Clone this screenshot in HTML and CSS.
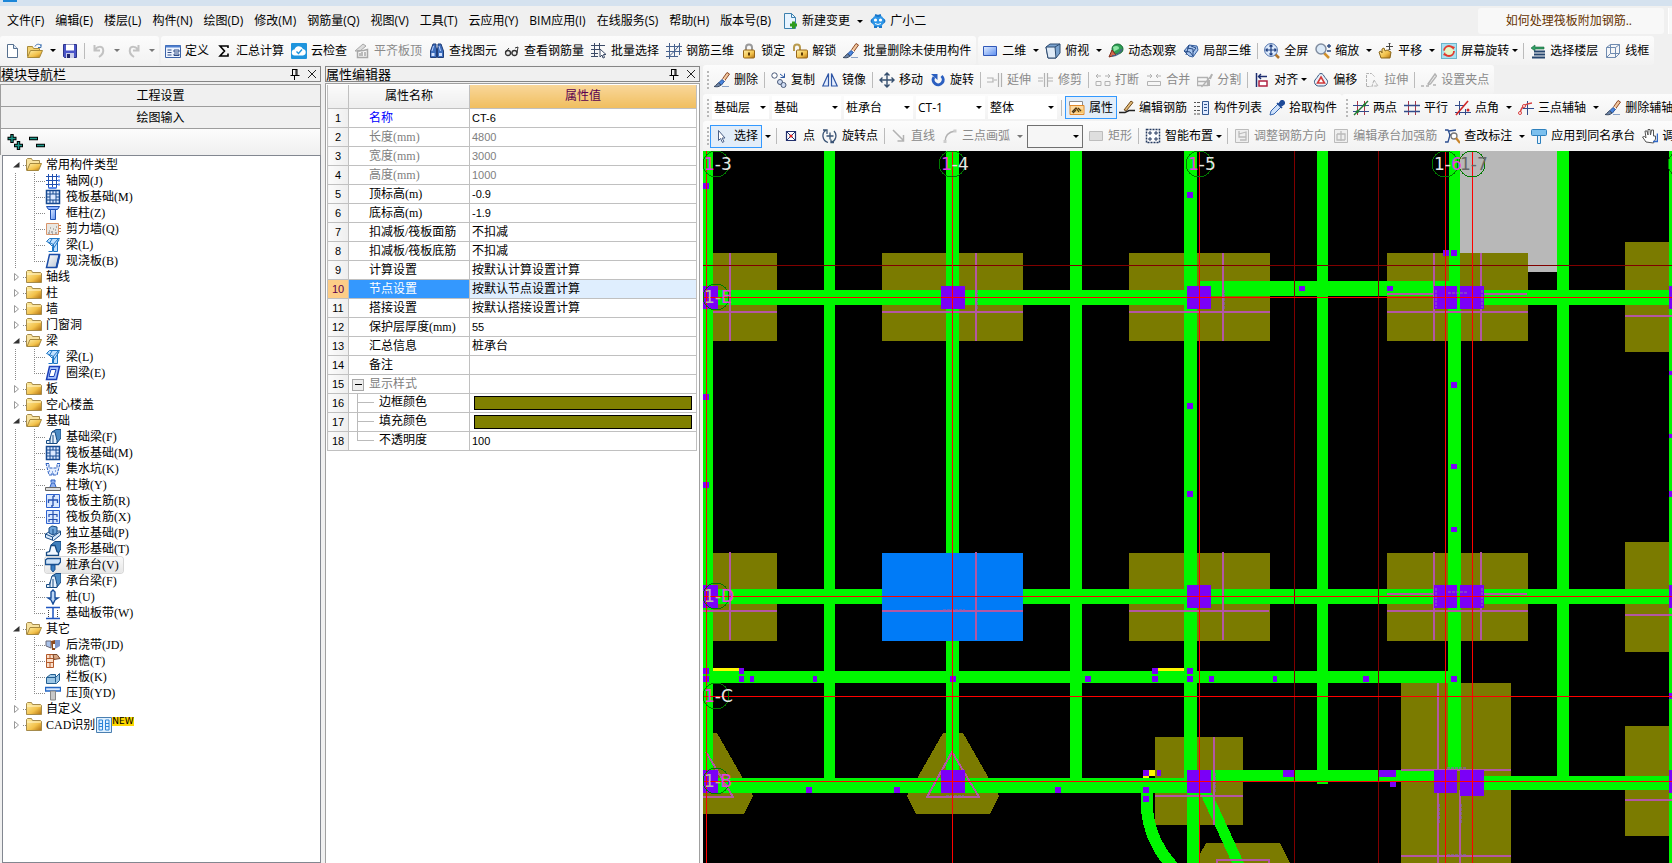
FILE: index.html
```
<!DOCTYPE html>
<html lang="zh-CN">
<head>
<meta charset="utf-8">
<title>钢筋算量</title>
<link rel="stylesheet" href="styles.css">
</head>
<body>
<svg class="sprite" aria-hidden="true">
  <defs>
    <linearGradient id="gGold" x1="0" y1="0" x2="1" y2="1"><stop offset="0" stop-color="#fff0a8"/><stop offset=".6" stop-color="#f2c14a"/><stop offset="1" stop-color="#b06f10"/></linearGradient>
    <linearGradient id="gBlue" x1="0" y1="0" x2="1" y2="1"><stop offset="0" stop-color="#e4efff"/><stop offset="1" stop-color="#5b8df0"/></linearGradient>
    <linearGradient id="gGray" x1="0" y1="0" x2="1" y2="1"><stop offset="0" stop-color="#fff"/><stop offset="1" stop-color="#b8c4d4"/></linearGradient>
  </defs>
  <symbol id="new" viewBox="0 0 16 16"><path d="M3.500 1.500h6l4 4v9h-10z" fill="#fff" stroke="#56708f"/><path d="M9.500 1.500v4h4" fill="#dbe6f5" stroke="#56708f"/></symbol>
  <symbol id="open" viewBox="0 0 16 16"><path d="M.5 13.500v-10h5l1 2h6v3" fill="#f3d271" stroke="#a88a3a"/><path d="M.5 14.500l3-7h12l-3 7z" fill="url(#gGold)" stroke="#a88a3a"/><path d="M8 3.500c1-2.500 4-3 6-1v-1m0 0v3h-3" fill="none" stroke="#3b6fb0"/></symbol>
  <symbol id="save" viewBox="0 0 16 16"><path d="M1.500 1.500h13v13h-12l-1-1z" fill="#4a55c8" stroke="#2c348a"/><path d="M4 1.500h8v6H4z" fill="#fff"/><path d="M4 10h8v5H4z" fill="#c9cdea"/><path d="M5 11h3v4H5z" fill="#22286d"/></symbol>
  <symbol id="undo" viewBox="0 0 16 16"><path d="M3.500 2v5.500H9M4 7c2-4 7-4 8-1s-1 6-4 8" fill="none" stroke="#c2c2c2" stroke-width="2"/></symbol>
  <symbol id="redo" viewBox="0 0 16 16"><path d="M12.500 2v5.500H7M12 7c-2-4-7-4-8-1s1 6 4 8" fill="none" stroke="#c2c2c2" stroke-width="2"/></symbol>
  <symbol id="define" viewBox="0 0 16 16"><path d="M.5 2.500h15v12H.5z" fill="#eef4ff" stroke="#3a62a8"/><path d="M.5 2.500h15v2H.5z" fill="#4d7fd0"/><path d="M2.500 7h4m-4 2.500h4m-4 2.500h4M9 7h5v2H9zM9 11h5v1.500H9z" fill="none" stroke="#2f4c85"/></symbol>
  <symbol id="sigma" viewBox="0 0 16 16"><path d="M12 5V3H4l4.500 5L4 13h8v-2.500" fill="none" stroke="#000" stroke-width="1.600"/></symbol>
  <symbol id="cloud" viewBox="0 0 16 16"><rect width="16" height="16" rx="1" fill="#1e94dd"/><path d="M4 12.500a3 3 0 0 1-.5-6A4.500 4.500 0 0 1 12 6a3.300 3.300 0 0 1 0 6.500z" fill="#fff"/><path d="M5.500 8.500l2 2 3.500-4" fill="none" stroke="#1e94dd" stroke-width="1.400"/></symbol>
  <symbol id="flat" viewBox="0 0 16 16"><path d="M1 8L9 1l3 2-6 5z" fill="#ddd" stroke="#a8a8a8"/><path d="M3.500 8v6.500h10v-8l-4 1zM6 10v3m2-4v4m3-4v4" fill="none" stroke="#a8a8a8" stroke-width="1.500"/></symbol>
  <symbol id="binoc" viewBox="0 0 16 16"><path d="M4 1h3v3l.5 2v8.500h-6V8zM9 1h3l2.500 7v6.500h-6V6L9 4z" fill="#3f6fbd" stroke="#1f3d78"/><path d="M2.500 10h3v3h-3zM10 10h3v3h-3z" fill="#cfe0ff"/><path d="M4.500 3L3 8m7-5l1.500 5" stroke="#bcd2ff"/></symbol>
  <symbol id="glasses" viewBox="0 0 16 16"><circle cx="4" cy="10" r="2.500" fill="#eee" stroke="#333" stroke-width="1.300"/><circle cx="10.500" cy="10" r="2.500" fill="#eee" stroke="#333" stroke-width="1.300"/><path d="M1.500 9L5 5m8 5l1-6-3 1M6.500 10h1.500" fill="none" stroke="#333"/></symbol>
  <symbol id="batch" viewBox="0 0 16 16"><path d="M0 2.500h14M0 6.500h9M3.500 0v14M8.500 0v7M0 10.500h7M0 13.500h7" fill="none" stroke="#3b4a66"/><path d="M9 6v8l2-2 1 3 1.500-.5-1-3H15z" fill="#fff" stroke="#3b4a66"/></symbol>
  <symbol id="cage" viewBox="0 0 16 16"><path d="M0 3.500h16M0 8.500h16M0 13.500h12M3.500 0v16M8.500 1v13M13.500 0v12M3.500 13l5-5 5-6" fill="none" stroke="#47628e"/></symbol>
  <symbol id="lock" viewBox="0 0 16 16"><path d="M5 8V4.500a3 3 0 0 1 6 0V8" fill="none" stroke="#9a9a9a" stroke-width="2"/><rect x="2.500" y="7" width="11" height="8" rx="1" fill="url(#gGold)" stroke="#96661a"/><path d="M8 9.500v3" stroke="#5d3c08" stroke-width="2"/></symbol>
  <symbol id="unlock" viewBox="0 0 16 16"><path d="M2 8V4.500a3 3 0 0 1 6 0V7" fill="none" stroke="#b99b4e" stroke-width="2"/><rect x="4.500" y="7" width="11" height="8" rx="1" fill="url(#gGold)" stroke="#96661a"/><path d="M10 9.500v3" stroke="#5d3c08" stroke-width="2"/></symbol>
  <symbol id="eraser" viewBox="0 0 16 16"><path d="M13 .5L15.500 2l-5 7L8 7.500z" fill="#f3c79e" stroke="#8b4a28"/><path d="M8 7.500l2.500 1.500-3 4-3-2z" fill="#4a86de" stroke="#24509a"/><path d="M8.500 7l2.500 1.800" stroke="#fff"/><path d="M0 14.500c2 0 2-2.500 4.500-3.500l2.500 2c-2 2-4 2-7 1.500z" fill="#6f86a8" stroke="#3a4a62"/><path d="M8 14.500h7" stroke="#8ba2c4"/></symbol>
  <symbol id="rect2d" viewBox="0 0 16 16"><path d="M1.500 3.500h13v9h-13z" fill="url(#gBlue)" stroke="#3058b8"/></symbol>
  <symbol id="cube" viewBox="0 0 16 16"><path d="M1 4l4-3h10v9l-4 5H3z" fill="#7ba3cf" stroke="#2d4b70"/><path d="M1 4h9l1 11H3z" fill="#dfeaf6" stroke="#2d4b70"/><path d="M10 4l5-3" stroke="#2d4b70"/></symbol>
  <symbol id="orbit" viewBox="0 0 16 16"><ellipse cx="9.500" cy="6" rx="5.500" ry="5" fill="#2e9e54" stroke="#146a32"/><path d="M5 4c3-2 6-1 6 1s-4 2-5 4" fill="#8ee6a5"/><path d="M1 14l3-7 4 5z" fill="#d26a4f" stroke="#7b2b1b"/><path d="M4 13c5 0 8-3 10-7" fill="none" stroke="#49608a" stroke-width="1.500"/></symbol>
  <symbol id="part3d" viewBox="0 0 16 16"><path d="M1 8l5-6 8 1 1 4-5 7-4-1z" fill="#a9c6ee" stroke="#355f9f"/><path d="M4 5l6 1v7M8 3l5 2-3 4M1 8l6 1 3 4M6 2L3 12" fill="none" stroke="#274a85"/></symbol>
  <symbol id="full" viewBox="0 0 16 16"><path d="M11 11l4 4" stroke="#b2762b" stroke-width="2.500"/><circle cx="7" cy="7" r="6.400" fill="#dce9fa" stroke="#4b6ea9"/><path d="M7 2v10M2 7h10M5.500 3.500L7 2l1.500 1.500M5.500 10.500L7 12l1.500-1.500M3.500 5.500L2 7l1.500 1.500M10.500 5.500L12 7l-1.500 1.500" fill="none" stroke="#1f3f80" stroke-width="1.200"/></symbol>
  <symbol id="zoom" viewBox="0 0 16 16"><path d="M9 10l5 5" stroke="#d0902c" stroke-width="2.500"/><circle cx="6" cy="6" r="5" fill="#dbe9f7" stroke="#808da0" stroke-width="1.500"/><path d="M12 3h4M14 1v4M12 8h4" stroke="#2c4a80" stroke-width="1.400"/></symbol>
  <symbol id="pan" viewBox="0 0 16 16"><path d="M3 15l-2-6 2-1 1 2V6l2-1 1 3 2-1 2 1 2 1-1 6z" fill="url(#gGold)" stroke="#8d681b"/><path d="M11.500 0v7M8 3.500h7M10.500 1l1-1 1 1M10.500 6l1 1 1-1" fill="none" stroke="#444"/></symbol>
  <symbol id="rotscreen" viewBox="0 0 16 16"><rect x=".5" y=".5" width="15" height="15" fill="#a9e0f0" stroke="#6cb6cc"/><circle cx="8" cy="8" r="5" fill="#e4f6c8" stroke="#e23b2e" stroke-width="1.800" stroke-dasharray="12 3.700"/><path d="M11 3l3 1-2 3zM5 13l-3-1 2-3z" fill="#e23b2e"/></symbol>
  <symbol id="floors" viewBox="0 0 16 16"><path d="M1 5l4-3v2h9v2H5v2z" fill="#2f9e63" stroke="#1b6a42" stroke-width=".6"/><path d="M4 8.500h11M4 11.500h11M2 14.500h13" stroke="#27476f" stroke-width="1.800"/></symbol>
  <symbol id="wire" viewBox="0 0 16 16"><path d="M1.500 4.500h9v10h-9zM1.500 4.500l4-3h9l-4 3M14.500 1.500v9l-4 4M5.500 1.500v9h9M5.500 10.500l-4 4" fill="#eff5fc" fill-opacity=".4" stroke="#6f8bb0"/></symbol>
  <symbol id="copy" viewBox="0 0 16 16"><circle cx="3.500" cy="3.500" r="2.700" fill="#fff" stroke="#4a5a78"/><circle cx="9" cy="10" r="2.500" fill="#cfdcf2" stroke="#4a5a78"/><circle cx="12.500" cy="13" r="2.500" fill="#cfdcf2" stroke="#4a5a78"/><path d="M9 2l4.500 3.500m0-4v4h-4" fill="none" stroke="#2c57a0"/></symbol>
  <symbol id="mirror" viewBox="0 0 16 16"><path d="M6.500 1.500v12.500H.8zM9.500 1.500v12.500h5.700z" fill="#e5eeff" stroke="#2f56a5" stroke-width="1.200"/></symbol>
  <symbol id="move" viewBox="0 0 16 16"><path d="M8 1v14M1 8h14M5.500 3.500L8 1l2.500 2.500M5.500 12.500L8 15l2.500-2.500M3.500 5.500L1 8l2.500 2.500M12.500 5.500L15 8l-2.500 2.500" fill="none" stroke="#37506f" stroke-width="1.400"/></symbol>
  <symbol id="rotate" viewBox="0 0 16 16"><path d="M4 5a5 5 0 1 0 7.500-1" fill="none" stroke="#2b5fc0" stroke-width="3"/><path d="M1 2h6.500v6z" fill="#2b5fc0"/></symbol>
  <symbol id="extend" viewBox="0 0 16 16"><path d="M0 6h6v4H0M7 8h3M11.500 1v14M14.500 1v14" fill="none" stroke="#b2b2b2" stroke-width="1.200"/></symbol>
  <symbol id="trim" viewBox="0 0 16 16"><path d="M0 6h5m-5 3h5M6.500 1v14M9.500 1v14M10 6h5m-5 3h5" fill="none" stroke="#b2b2b2" stroke-width="1.200"/></symbol>
  <symbol id="break" viewBox="0 0 16 16"><path d="M1 4h5M10 4h5M3 2L1 4l2 2m10-4l2 2-2 2M1 9.500h5v4H1zM10 9.500h5v4h-5z" fill="none" stroke="#b2b2b2"/></symbol>
  <symbol id="merge" viewBox="0 0 16 16"><path d="M1 4h5M10 4h5M4 2l2 2-2 2m8-4l-2 2 2 2M1.500 9.500h13v4h-13z" fill="none" stroke="#b2b2b2"/></symbol>
  <symbol id="split" viewBox="0 0 16 16"><path d="M.5 5.500h10v8h-10zM.5 9.500h10M4.500 15L15 3" fill="none" stroke="#b2b2b2" stroke-width="1.300"/><path d="M12 8v6M15 2l-2 5" stroke="#b2b2b2" stroke-width="2"/></symbol>
  <symbol id="align" viewBox="0 0 16 16"><path d="M2.500 1v14" stroke="#1d2d70" stroke-width="1.500"/><path d="M5 9h8v5H5z" fill="#fff" stroke="#b02040" stroke-width="1.500"/><path d="M5 4.500h8M7 2L4.500 4.500 7 7" fill="none" stroke="#1d2d70" stroke-width="1.400"/></symbol>
  <symbol id="offset" viewBox="0 0 16 16"><path d="M8 1.500c2 0 2.500 2 4 4s3 3 2.500 5-2 3.500-4 3.500h-5c-2 0-3.500-1.500-4-3.500s1-3 2.500-5 2-4 4-4z" fill="#eaf1fa" stroke="#38587f"/><path d="M8 5l3.500 6h-7z" fill="#fff" stroke="#d23b3b" stroke-width="1.600"/></symbol>
  <symbol id="stretch" viewBox="0 0 16 16"><path d="M2.500 14V1.500h5l3 3M2.500 14.500h5M10 8l4 6H8z" fill="none" stroke="#b2b2b2" stroke-dasharray="3 1"/></symbol>
  <symbol id="grip" viewBox="0 0 16 16"><path d="M0 14h3m2 0h3M7 12L14 2l1.500 2-6 8-2 .5zM12 13h3" fill="none" stroke="#b2b2b2" stroke-width="1.400"/></symbol>
  <symbol id="props" viewBox="0 0 16 16"><path d="M.5 1.500h13v4H.5z" fill="#fff" stroke="#8b8b8b"/><path d="M1 5.500h14v9H1z" fill="#fbd9a0" stroke="#e08a2c"/><path d="M4 12l4-5 4 2 3 1v3h-5z" fill="#f6c46a"/><path d="M3 12l4-4 3 4m-1-4l3 3m-8 2l3-3" fill="none" stroke="#4b3413" stroke-width="1.200"/></symbol>
  <symbol id="editbar" viewBox="0 0 16 16"><path d="M0 12.500h6l4-2h6" fill="none" stroke="#222" stroke-width="1.400"/><path d="M5 10l7-9 2 1.500-6.500 8z" fill="#e4bd7b" stroke="#6f4a1c"/></symbol>
  <symbol id="list" viewBox="0 0 16 16"><path d="M0 2.500h2m1 0h3M0 6.500h2m1 0h3M0 10.500h2m1 0h3M0 14h2m1 0h3" stroke="#555"/><path d="M8.500 1.500h6v13h-6z" fill="#dfeaff" stroke="#31568f"/><path d="M10 4.500h3m-3 3h3m-3 3h3" stroke="#31568f"/></symbol>
  <symbol id="pick" viewBox="0 0 16 16"><path d="M1 15l1-4 7-7 3 3-7 7z" fill="#cfe2fb" stroke="#3767b0"/><path d="M8 3l5 5M9.500 4.500L12 1c2-1 4 1 3 3l-3.500 2.500z" fill="#1f4b98" stroke="#1f4b98" stroke-width="1.500"/></symbol>
  <symbol id="axis2" viewBox="0 0 16 16"><path d="M4.500 1v14M11.500 1v14" stroke="#a73548"/><path d="M0 5.500h16M0 11.500h16" stroke="#334b8a"/><path d="M1 15L15 1" stroke="#1f7a2e" stroke-width="1.500"/><circle cx="4.500" cy="11.500" r="1.500" fill="#1f7a2e"/><circle cx="11.500" cy="5" r="1.500" fill="#1f7a2e"/></symbol>
  <symbol id="axispar" viewBox="0 0 16 16"><path d="M4.500 1v14M11.500 1v14" stroke="#a73548"/><path d="M0 5.500h16M0 11.500h16" stroke="#334b8a" stroke-width="1.300"/></symbol>
  <symbol id="axisang" viewBox="0 0 16 16"><path d="M4.500 1v14M0 5.500h9M0 12.500h16M10.500 9v6" stroke="#334b8a"/><path d="M1 15L13 1" stroke="#d02828" stroke-width="1.600"/><circle cx="13" cy="10" r="1.500" fill="#d02828"/></symbol>
  <symbol id="axis3" viewBox="0 0 16 16"><path d="M9.500 1v14M5 8.500h11" stroke="#334b8a"/><path d="M2 14C3 7 6 4 14 3" fill="none" stroke="#d84040" stroke-width="1.500"/><circle cx="2" cy="13" r="1.500" fill="#fff" stroke="#d84040"/><circle cx="6" cy="6" r="1.500" fill="#fff" stroke="#d84040"/></symbol>
  <symbol id="cursor" viewBox="0 0 16 16"><path d="M4.500 2.500v10l2-2 2 4 1.500-1-2-3.500h3z" fill="#fff" stroke="#4a5f85"/></symbol>
  <symbol id="point" viewBox="0 0 16 16"><path d="M3.500 3.500h9v9h-9z" fill="#fff" stroke="#22306d" stroke-width="1.200"/><path d="M3.500 3.500l9 9m0-9l-9 9" stroke="#22306d"/><circle cx="8" cy="8" r="1.600" fill="#d22"/></symbol>
  <symbol id="rotpoint" viewBox="0 0 16 16"><path d="M4 2a7 7 0 0 0 2 12.500M12 3a7 7 0 0 1-3 11.500M1 2h4v4M8 4.500v7M4.500 8h7M12 14.500H9v-3" fill="none" stroke="#3a5375" stroke-width="1.300"/></symbol>
  <symbol id="line" viewBox="0 0 16 16"><path d="M2 2l10 10M12.500 7v6h-6" fill="none" stroke="#b2b2b2" stroke-width="1.500"/></symbol>
  <symbol id="arc" viewBox="0 0 16 16"><path d="M3 14C3 8 6 4 13 3" fill="none" stroke="#b2b2b2" stroke-width="1.500"/><path d="M1.500 12h3v3h-3zM11.500 1.500h3v3h-3z" fill="#ccc"/></symbol>
  <symbol id="rectg" viewBox="0 0 16 16"><path d="M1.500 3.500h13v9h-13z" fill="#dedede" stroke="#bdbdbd"/></symbol>
  <symbol id="smart" viewBox="0 0 16 16"><path d="M1.500 1.500h13v13h-13z" fill="#fff" stroke="#263b60" stroke-dasharray="2 1" stroke-width="1.500"/><path d="M5 3v4M3 5h4M11 3v4M9 5h4M5 9v4M3 11h4M11 9v4M9 11h4" stroke="#263b60"/></symbol>
  <symbol id="rebar1" viewBox="0 0 16 16"><path d="M1.500 1.500h13v13h-13z" fill="#efefef" stroke="#bbb"/><path d="M5 3v6h7M5 6l7-2v8H6" fill="none" stroke="#bbb" stroke-width="1.300"/></symbol>
  <symbol id="rebar2" viewBox="0 0 16 16"><path d="M1.500 1.500h13v13h-13z" fill="#efefef" stroke="#bbb"/><path d="M8 3v10M4 6h8v6M4 6v6h8" fill="none" stroke="#bbb" stroke-width="1.300"/></symbol>
  <symbol id="dim" viewBox="0 0 16 16"><path d="M1 2h3l2 5-2 7H1M5 3l7-1M5 7h5" fill="none" stroke="#2d4f91" stroke-width="1.300"/><circle cx="10" cy="8" r="3" fill="#fff" stroke="#777" stroke-width="1.300"/><path d="M12 10l4 5" stroke="#c98428" stroke-width="2.200"/></symbol>
  <symbol id="apply" viewBox="0 0 16 16"><rect x=".5" y="1.500" width="15" height="6" rx="1" fill="#7cc0ee" stroke="#2e80bd"/><path d="M6.500 7.500h3v8h-3z" fill="#e5f2fc" stroke="#2e80bd"/></symbol>
  <symbol id="hand" viewBox="0 0 16 16"><path d="M4 14L.5 9l2-.5L4 10 3 3l2 0 1 4V1.500l2 0L8.500 7l1-5h2v6l2 0v3l-2 4z" fill="#fff" stroke="#555"/><path d="M11 13.500h4.500v-8" fill="none" stroke="#2f68c8" stroke-width="1.500"/></symbol>
  <symbol id="newchg" viewBox="0 0 16 16"><path d="M2.500 .5h7l4 4v11h-11z" fill="#e8f4ff" stroke="#3c80ae"/><path d="M9.500 .5v4h4" fill="none" stroke="#3c80ae"/><path d="M11.500 8.500v7M8 12h7" stroke="#2f9c1f" stroke-width="3"/></symbol>
  <symbol id="mascot" viewBox="0 0 16 16"><ellipse cx="8" cy="8" rx="7.500" ry="4" fill="#1976c9"/><circle cx="8" cy="8" r="6" fill="#2d96e8"/><path d="M5 2l3 1 3-1M4 14h3m2 0h3" stroke="#1976c9" stroke-width="2"/><circle cx="5.500" cy="7" r="1.600" fill="#fff"/><circle cx="10.500" cy="7" r="1.600" fill="#fff"/><path d="M5 10.500q3 2 6 0" stroke="#fff" fill="none"/></symbol>
  <symbol id="pin" viewBox="0 0 12 12"><path d="M3.500 1v6M3 1.500h5M7 1v6M8 1v6M1.500 7.500h9M5.500 8v4" fill="none" stroke="#000"/></symbol>
  <symbol id="close" viewBox="0 0 12 12"><path d="M2 2l8 8M10 2l-8 8" stroke="#222"/></symbol>
  <symbol id="expand" viewBox="0 0 18 18"><path d="M6 1v9M1.500 5.500h9M12.500 8v9M8 12.500h9" stroke="#000" stroke-width="3.400"/><path d="M6 2v7M2.500 5.500h7M12.500 9v7M9 12.500h7" stroke="#1d9a8c" stroke-width="1.400"/></symbol>
  <symbol id="collapse" viewBox="0 0 18 18"><path d="M1 5.500h9M8 12.500h9" stroke="#000" stroke-width="3.400"/><path d="M2 5.500h7M9 12.500h7" stroke="#1d9a8c" stroke-width="1.400"/></symbol>
  <symbol id="shut" viewBox="0 0 16 16"><path d="M.5 13.500v-11l1-1h4l1 2h8l1 1v9z" fill="url(#gGold)" stroke="#a58b4c"/><path d="M1 5h14" stroke="#fff6cf"/></symbol>
  <symbol id="opened" viewBox="0 0 16 16"><path d="M.5 13.500v-11l1-1h4l1 2h7v3" fill="#f8e3a0" stroke="#a58b4c"/><path d="M1 13.500l3-7h11.500l-3 7z" fill="url(#gGold)" stroke="#a5883e"/></symbol>
  <symbol id="tri-r" viewBox="0 0 8 16"><path d="M1.500 4.500v7l4-3.500z" fill="#fff" stroke="#999"/></symbol>
  <symbol id="tri-d" viewBox="0 0 8 16"><path d="M6.500 5v5.500H0z" fill="#333"/></symbol>
  <symbol id="t-grid" viewBox="0 0 16 16"><path d="M3.500 1v14M7.500 1v14M11.500 1v14M1 3.500h12M1 7.500h12M1 11.500h12" stroke="#1f4fb0"/><path d="M13 3.500h2m-2 4h2m-2 4h2M3.500 15h8" stroke="#5a8af0" stroke-width="2"/></symbol>
  <symbol id="t-raft" viewBox="0 0 16 16"><path d="M1.500 1.500h13v13h-13z" fill="#dbe9ff" stroke="#174a91" stroke-width="1.500"/><path d="M5 2v12M11 2v12M2 5h12M2 11h12M8 2v3m0 6v3M2 8h3m6 0h3" stroke="#174a91"/></symbol>
  <symbol id="t-col" viewBox="0 0 16 16"><path d="M1.500 1.500h13l-2 3h-9z" fill="#8eb4ff" stroke="#1c4fb0"/><path d="M5.500 4.500h5v10h-5z" fill="url(#gBlue)" stroke="#1c4fb0"/></symbol>
  <symbol id="t-wall" viewBox="0 0 16 16"><path d="M1.500 2.500h12v11h-12z" fill="#e9e7e2" stroke="#d9946a"/><path d="M3 12h2m1-1h2m-1 2h1m2-1h2m-2-3h1M4 10h1m3-2h1m2-2h1M5 7h1" stroke="#777"/><path d="M14 4.500h2m-2 3h2m-2 3h2" stroke="#cf7d45"/></symbol>
  <symbol id="t-beam" viewBox="0 0 16 16"><path d="M1.500 4.500l3-3h10l-2 3v10h-4v-7z" fill="#bfe0ff" stroke="#1e76c4"/><path d="M4 7l3-5m0 7l6-7M8 12l6-9M3.500 14.500h4v-5l-4-4" fill="none" stroke="#1e76c4"/></symbol>
  <symbol id="t-slab" viewBox="0 0 16 16"><path d="M4.500 1.500h10l-3 13h-10z" fill="url(#gGray)" stroke="#1b4da8" stroke-width="1.500"/><path d="M14.500 1.500l-3 13" stroke="#1b4da8" stroke-width="2"/></symbol>
  <symbol id="t-ring" viewBox="0 0 16 16"><path d="M4.500 1.500h10l-3 13h-10z" fill="#a7c4ff" stroke="#1b3fb8" stroke-width="1.500"/><path d="M6 4.500h5l-2 7H4z" fill="#fff" stroke="#1b3fb8"/></symbol>
  <symbol id="t-fbeam" viewBox="0 0 16 16"><path d="M7 3l4-2.500h5V9l-4 5z" fill="#4d8cc4" stroke="#164a82"/><path d="M1.500 14.500v-3h3L7 3h3l2 8.500v3z" fill="#e6f1fc" stroke="#164a82"/><path d="M5 14V9m3 5V6" stroke="#164a82"/></symbol>
  <symbol id="t-pit" viewBox="0 0 16 16"><path d="M1 2.500h3V7h8V2.500h3L12 14H4z" fill="#e5efff" stroke="#2b5fc0" stroke-dasharray="3 1"/><path d="M4 10h1m2 1h1m2-1h1M6 13h3" stroke="#2b5fc0"/></symbol>
  <symbol id="t-pier" viewBox="0 0 16 16"><path d="M.5 10.500h15v3H.5z" fill="#ddd" stroke="#666"/><path d="M5 10l1.500-4h3L11 10M6 5.500V3h4v2.500" fill="#8fb0f0" stroke="#2b5fc0"/></symbol>
  <symbol id="t-main" viewBox="0 0 16 16"><path d="M1.500 1.500h13v13h-13z" fill="#d9e8ff" stroke="#2f62cf"/><path d="M8 3v10M3.500 10V7h9v3M8 3h2M6 13h2" fill="none" stroke="#2550b0" stroke-width="1.300"/></symbol>
  <symbol id="t-neg" viewBox="0 0 16 16"><path d="M1.500 1.500h13v13h-13z" fill="#d9e8ff" stroke="#2f62cf"/><path d="M8 2v12M4 5.500h8M4 10.500h8M4 5v3m8-3v3m-8 2v3m8-3v3" fill="none" stroke="#2550b0" stroke-width="1.200"/></symbol>
  <symbol id="t-ind" viewBox="0 0 16 16"><path d="M.5 9l5-3h10v4l-7 5.500-8-3z" fill="#dcecfc" stroke="#174a85"/><path d="M4 3l3-2 5 1v6l-4 2-4-2z" fill="#6da3d7" stroke="#174a85"/><path d="M8 4v6M.5 9l7 3 8-5.500M7.500 12v3" fill="none" stroke="#174a85"/></symbol>
  <symbol id="t-strip" viewBox="0 0 16 16"><path d="M6 4l4-3.500h6v7L13 13z" fill="#3f80be" stroke="#164a82"/><path d="M1.500 14.500v-3l3-1 1.500-6h4l2 6 1.500 1v3z" fill="#f2f8ff" stroke="#164a82" stroke-width="1.300"/></symbol>
  <symbol id="t-cap" viewBox="0 0 16 16"><path d="M.5 6.500V3l2-1.500h13V5l-2 2.500h-13z" fill="#cfe3f8" stroke="#1a5190" stroke-width="1.300"/><path d="M6 8h4v4.500L8 15l-2-2.500z" fill="#3a7fc4" stroke="#1a5190"/></symbol>
  <symbol id="t-pile" viewBox="0 0 16 16"><path d="M6 3l2-2 2 2v6h3l-3 2-2 4-2-4-3-2h3z" fill="#bdd7f6" stroke="#174d9a" stroke-width="1.400"/></symbol>
  <symbol id="t-band" viewBox="0 0 16 16"><path d="M1 2.500h14M1 13.500h14M8 3v10" stroke="#1f56c0" stroke-width="1.500"/><path d="M3.500 5v8M12.500 5v8" stroke="#444" stroke-dasharray="1 1"/></symbol>
  <symbol id="t-post" viewBox="0 0 16 16"><path d="M1 4h5v7l-5-2z" fill="#a9c2ea" stroke="#667"/><path d="M6 4l4-1v10H7z" fill="#8d4a1e"/><path d="M10 3h5v6l-5 3z" fill="#7d97cc"/><path d="M8 7h2v4H8z" fill="#fff"/></symbol>
  <symbol id="t-eave" viewBox="0 0 16 16"><path d="M1.500 1.500h7v13h-7zM1.500 5.500h7m-7 4h7M5 2v3m0 5v4" fill="#fbe0ca" stroke="#b3592a"/><path d="M8 1.500h4l3 4-6 1z" fill="#d9a682" stroke="#7b4a2c"/></symbol>
  <symbol id="t-rail" viewBox="0 0 16 16"><path d="M1.500 8.500l4-3h5v3l4-4v7l-3 3h-10z" fill="#9cc6e6" stroke="#245e90"/><path d="M1.500 8.500h9v5" fill="none" stroke="#245e90"/></symbol>
  <symbol id="t-top" viewBox="0 0 16 16"><path d="M.5 2.500h15v3.500H.5z" fill="#d9e9ff" stroke="#2467c4" stroke-width="1.300"/><path d="M5.500 6h5v9h-5z" fill="#c8c8c8" stroke="#888"/></symbol>
  <symbol id="t-cad" viewBox="0 0 16 16"><path d="M.5 .5h15v15H.5z" fill="#dff0ff" stroke="#4b7fb0"/><path d="M3 3h3.500v10H3zM9.500 3H13v10H9.500zM3 6.500h3.500M9.500 6.500H13M3 9.500h3.500M9.500 9.500H13" fill="none" stroke="#2b84d6"/></symbol>
</svg>

<div class="titlebar"><span class="appicon"></span></div>
<nav class="menubar">
  <button>文件(F)</button><button>编辑(E)</button><button>楼层(L)</button><button>构件(N)</button><button>绘图(D)</button><button>修改(M)</button><button>钢筋量(Q)</button><button>视图(V)</button><button>工具(T)</button><button>云应用(Y)</button><button>BIM应用(I)</button><button>在线服务(S)</button><button>帮助(H)</button><button>版本号(B)</button>
  <button class="tb"><svg class="i"><use href="#newchg"/></svg>新建变更</button><button class="dd" aria-label="新建变更选项"></button>
  <button class="tb"><svg class="i"><use href="#mascot"/></svg>广小二</button>
  <a class="hint" href="#">如何处理筏板附加钢筋..</a><span class="edge"></span>
</nav>

<div class="bar bar-top">
  <div class="group">
    <button class="tb" aria-label="新建"><svg class="i"><use href="#new"/></svg></button>
    <button class="tb" aria-label="打开"><svg class="i"><use href="#open"/></svg></button><button class="dd" aria-label="打开选项"></button>
    <button class="tb" aria-label="保存"><svg class="i"><use href="#save"/></svg></button><span class="sep"></span>
    <button class="tb" aria-label="撤销" disabled><svg class="i"><use href="#undo"/></svg></button><button class="dd" aria-label="撤销选项" disabled></button>
    <button class="tb" aria-label="重做" disabled><svg class="i"><use href="#redo"/></svg></button><button class="dd" aria-label="重做选项" disabled></button>
  </div>
  <div class="group">
    <button class="tb"><svg class="i"><use href="#define"/></svg>定义</button>
    <button class="tb"><svg class="i"><use href="#sigma"/></svg>汇总计算</button>
    <button class="tb"><svg class="i"><use href="#cloud"/></svg>云检查</button>
    <button class="tb" disabled><svg class="i"><use href="#flat"/></svg>平齐板顶</button>
    <button class="tb"><svg class="i"><use href="#binoc"/></svg>查找图元</button>
    <button class="tb"><svg class="i"><use href="#glasses"/></svg>查看钢筋量</button>
    <button class="tb"><svg class="i"><use href="#batch"/></svg>批量选择</button>
    <button class="tb"><svg class="i"><use href="#cage"/></svg>钢筋三维</button>
    <button class="tb"><svg class="i"><use href="#lock"/></svg>锁定</button>
    <button class="tb"><svg class="i"><use href="#unlock"/></svg>解锁</button>
    <button class="tb"><svg class="i"><use href="#eraser"/></svg>批量删除未使用构件</button>
  </div>
  <div class="group">
    <button class="tb"><svg class="i"><use href="#rect2d"/></svg>二维</button><button class="dd" aria-label="二维选项"></button>
    <button class="tb"><svg class="i"><use href="#cube"/></svg>俯视</button><button class="dd" aria-label="俯视选项"></button>
    <button class="tb"><svg class="i"><use href="#orbit"/></svg>动态观察</button>
    <button class="tb"><svg class="i"><use href="#part3d"/></svg>局部三维</button><span class="sep"></span>
    <button class="tb"><svg class="i"><use href="#full"/></svg>全屏</button>
    <button class="tb"><svg class="i"><use href="#zoom"/></svg>缩放</button><button class="dd" aria-label="缩放选项"></button>
    <button class="tb"><svg class="i"><use href="#pan"/></svg>平移</button><button class="dd" aria-label="平移选项"></button>
    <button class="tb"><svg class="i"><use href="#rotscreen"/></svg>屏幕旋转</button><button class="dd tight" aria-label="屏幕旋转选项"></button><span class="sep"></span>
    <button class="tb"><svg class="i"><use href="#floors"/></svg>选择楼层</button>
    <button class="tb"><svg class="i"><use href="#wire"/></svg>线框</button>
  </div>
</div>

<main class="work">
  <aside class="nav">
    <header class="cap"><h2>模块导航栏</h2><button aria-label="固定"><svg class="s"><use href="#pin"/></svg></button><button aria-label="关闭"><svg class="s"><use href="#close"/></svg></button></header>
    <button class="stage">工程设置</button>
    <button class="stage">绘图输入</button>
    <div class="treebar"><button aria-label="全部展开"><svg><use href="#expand"/></svg></button><button aria-label="全部折叠"><svg><use href="#collapse"/></svg></button></div>
    <ul class="tree">
      <li><div class="node"><svg class="t"><use href="#tri-d"/></svg><i></i><svg class="i"><use href="#opened"/></svg>常用构件类型</div>
        <ul>
          <li><svg class="i"><use href="#t-grid"/></svg>轴网(J)</li><li><svg class="i"><use href="#t-raft"/></svg>筏板基础(M)</li><li><svg class="i"><use href="#t-col"/></svg>框柱(Z)</li><li><svg class="i"><use href="#t-wall"/></svg>剪力墙(Q)</li><li><svg class="i"><use href="#t-beam"/></svg>梁(L)</li><li><svg class="i"><use href="#t-slab"/></svg>现浇板(B)</li>
        </ul></li>
      <li><div class="node"><svg class="t"><use href="#tri-r"/></svg><i></i><svg class="i"><use href="#shut"/></svg>轴线</div></li>
      <li><div class="node"><svg class="t"><use href="#tri-r"/></svg><i></i><svg class="i"><use href="#shut"/></svg>柱</div></li>
      <li><div class="node"><svg class="t"><use href="#tri-r"/></svg><i></i><svg class="i"><use href="#shut"/></svg>墙</div></li>
      <li><div class="node"><svg class="t"><use href="#tri-r"/></svg><i></i><svg class="i"><use href="#shut"/></svg>门窗洞</div></li>
      <li><div class="node"><svg class="t"><use href="#tri-d"/></svg><i></i><svg class="i"><use href="#opened"/></svg>梁</div>
        <ul>
          <li><svg class="i"><use href="#t-beam"/></svg>梁(L)</li><li><svg class="i"><use href="#t-ring"/></svg>圈梁(E)</li>
        </ul></li>
      <li><div class="node"><svg class="t"><use href="#tri-r"/></svg><i></i><svg class="i"><use href="#shut"/></svg>板</div></li>
      <li><div class="node"><svg class="t"><use href="#tri-r"/></svg><i></i><svg class="i"><use href="#shut"/></svg>空心楼盖</div></li>
      <li><div class="node"><svg class="t"><use href="#tri-d"/></svg><i></i><svg class="i"><use href="#opened"/></svg>基础</div>
        <ul>
          <li><svg class="i"><use href="#t-fbeam"/></svg>基础梁(F)</li><li><svg class="i"><use href="#t-raft"/></svg>筏板基础(M)</li><li><svg class="i"><use href="#t-pit"/></svg>集水坑(K)</li><li><svg class="i"><use href="#t-pier"/></svg>柱墩(Y)</li><li><svg class="i"><use href="#t-main"/></svg>筏板主筋(R)</li><li><svg class="i"><use href="#t-neg"/></svg>筏板负筋(X)</li><li><svg class="i"><use href="#t-ind"/></svg>独立基础(P)</li><li><svg class="i"><use href="#t-strip"/></svg>条形基础(T)</li><li><span class="picked"><svg class="i"><use href="#t-cap"/></svg>桩承台(V)</span></li><li><svg class="i"><use href="#t-fbeam"/></svg>承台梁(F)</li><li><svg class="i"><use href="#t-pile"/></svg>桩(U)</li><li><svg class="i"><use href="#t-band"/></svg>基础板带(W)</li>
        </ul></li>
      <li><div class="node"><svg class="t"><use href="#tri-d"/></svg><i></i><svg class="i"><use href="#opened"/></svg>其它</div>
        <ul>
          <li><svg class="i"><use href="#t-post"/></svg>后浇带(JD)</li><li><svg class="i"><use href="#t-eave"/></svg>挑檐(T)</li><li><svg class="i"><use href="#t-rail"/></svg>栏板(K)</li><li><svg class="i"><use href="#t-top"/></svg>压顶(YD)</li>
        </ul></li>
      <li><div class="node"><svg class="t"><use href="#tri-r"/></svg><i></i><svg class="i"><use href="#shut"/></svg>自定义</div></li>
      <li><div class="node"><svg class="t"><use href="#tri-r"/></svg><i></i><svg class="i"><use href="#shut"/></svg>CAD识别<svg class="i"><use href="#t-cad"/></svg><b class="fresh">NEW</b></div></li>
    </ul>
  </aside>

  <section class="props">
    <header class="cap"><h2>属性编辑器</h2><button aria-label="固定"><svg class="s"><use href="#pin"/></svg></button><button aria-label="关闭"><svg class="s"><use href="#close"/></svg></button></header>
    <div class="sheet">
      <table>
        <thead><tr><th class="no"></th><th class="key">属性名称</th><th class="val">属性值</th></tr></thead>
        <tbody>
          <tr><th>1</th><td class="link">名称</td><td class="n">CT-6</td></tr>
          <tr class="dim"><th>2</th><td>长度(mm)</td><td class="n">4800</td></tr>
          <tr class="dim"><th>3</th><td>宽度(mm)</td><td class="n">3000</td></tr>
          <tr class="dim"><th>4</th><td>高度(mm)</td><td class="n">1000</td></tr>
          <tr><th>5</th><td>顶标高(m)</td><td class="n">-0.9</td></tr>
          <tr><th>6</th><td>底标高(m)</td><td class="n">-1.9</td></tr>
          <tr><th>7</th><td>扣减板/筏板面筋</td><td>不扣减</td></tr>
          <tr><th>8</th><td>扣减板/筏板底筋</td><td>不扣减</td></tr>
          <tr><th>9</th><td>计算设置</td><td>按默认计算设置计算</td></tr>
          <tr class="active"><th>10</th><td>节点设置</td><td>按默认节点设置计算</td></tr>
          <tr><th>11</th><td>搭接设置</td><td>按默认搭接设置计算</td></tr>
          <tr><th>12</th><td>保护层厚度(mm)</td><td class="n">55</td></tr>
          <tr><th>13</th><td>汇总信息</td><td>桩承台</td></tr>
          <tr><th>14</th><td>备注</td><td></td></tr>
          <tr class="dim"><th>15</th><td class="fold"><button class="minus" aria-label="折叠显示样式"></button>显示样式</td><td></td></tr>
          <tr><th>16</th><td class="sub"><i></i>边框颜色</td><td class="swatch"><span></span></td></tr>
          <tr><th>17</th><td class="sub"><i></i>填充颜色</td><td class="swatch"><span></span></td></tr>
          <tr><th>18</th><td class="sub end"><i></i>不透明度</td><td class="n">100</td></tr>
        </tbody>
      </table>
    </div>
  </section>

  <section class="view">
    <div class="bar">
      <div class="group">
        <span class="grip"></span>
        <button class="tb"><svg class="i"><use href="#eraser"/></svg>删除</button><span class="sep"></span>
        <button class="tb"><svg class="i"><use href="#copy"/></svg>复制</button>
        <button class="tb"><svg class="i"><use href="#mirror"/></svg>镜像</button><span class="sep"></span>
        <button class="tb"><svg class="i"><use href="#move"/></svg>移动</button>
        <button class="tb"><svg class="i"><use href="#rotate"/></svg>旋转</button><span class="sep"></span>
        <button class="tb" disabled><svg class="i"><use href="#extend"/></svg>延伸</button>
        <button class="tb" disabled><svg class="i"><use href="#trim"/></svg>修剪</button><span class="sep"></span>
        <button class="tb" disabled><svg class="i"><use href="#break"/></svg>打断</button>
        <button class="tb" disabled><svg class="i"><use href="#merge"/></svg>合并</button>
        <button class="tb" disabled><svg class="i"><use href="#split"/></svg>分割</button><span class="sep"></span>
        <button class="tb"><svg class="i"><use href="#align"/></svg>对齐</button><button class="dd tight" aria-label="对齐选项"></button>
        <button class="tb"><svg class="i"><use href="#offset"/></svg>偏移</button>
        <button class="tb" disabled><svg class="i"><use href="#stretch"/></svg>拉伸</button><span class="sep"></span>
        <button class="tb" disabled><svg class="i"><use href="#grip"/></svg>设置夹点</button>
      </div>
    </div>
    <div class="bar bar-mid">
      <div class="group">
        <span class="grip"></span>
        <span class="combos">
          <select class="short" aria-label="楼层"><option>基础层</option></select>
          <select aria-label="构件大类"><option>基础</option></select>
          <select aria-label="构件类型"><option>桩承台</option></select>
          <select aria-label="构件"><option>CT-1</option></select>
          <select aria-label="范围"><option>整体</option></select>
        </span>
        <span class="sep near"></span>
        <button class="tb on"><svg class="i"><use href="#props"/></svg>属性</button>
        <button class="tb near"><svg class="i"><use href="#editbar"/></svg>编辑钢筋</button>
        <button class="tb"><svg class="i"><use href="#list"/></svg>构件列表</button>
        <button class="tb"><svg class="i"><use href="#pick"/></svg>拾取构件</button>
      </div>
      <div class="group">
        <span class="grip"></span>
        <button class="tb"><svg class="i"><use href="#axis2"/></svg>两点</button>
        <button class="tb"><svg class="i"><use href="#axispar"/></svg>平行</button>
        <button class="tb"><svg class="i"><use href="#axisang"/></svg>点角</button><button class="dd" aria-label="点角选项"></button>
        <button class="tb"><svg class="i"><use href="#axis3"/></svg>三点辅轴</button><button class="dd" aria-label="三点辅轴选项"></button>
        <button class="tb"><svg class="i"><use href="#eraser"/></svg>删除辅轴</button>
      </div>
    </div>
    <div class="bar bar-low">
      <div class="group">
        <span class="grip"></span>
        <button class="tb on first"><svg class="i"><use href="#cursor"/></svg>选择</button><button class="dd tight" aria-label="选择选项"></button><span class="sep"></span>
        <button class="tb"><svg class="i"><use href="#point"/></svg>点</button>
        <button class="tb"><svg class="i"><use href="#rotpoint"/></svg>旋转点</button><span class="sep"></span>
        <button class="tb" disabled><svg class="i"><use href="#line"/></svg>直线</button>
        <button class="tb" disabled><svg class="i"><use href="#arc"/></svg>三点画弧</button><button class="dd" aria-label="画弧选项" disabled></button>
        <select class="boxed" aria-label="画法"><option></option></select>
        <button class="tb" disabled><svg class="i"><use href="#rectg"/></svg>矩形</button><span class="sep"></span>
        <button class="tb"><svg class="i"><use href="#smart"/></svg>智能布置</button><button class="dd tight" aria-label="智能布置选项"></button><span class="sep"></span>
        <button class="tb" disabled><svg class="i"><use href="#rebar1"/></svg>调整钢筋方向</button>
        <button class="tb" disabled><svg class="i"><use href="#rebar2"/></svg>编辑承台加强筋</button>
        <button class="tb"><svg class="i"><use href="#dim"/></svg>查改标注</button><button class="dd" aria-label="查改标注选项"></button>
        <button class="tb"><svg class="i"><use href="#apply"/></svg>应用到同名承台</button>
        <button class="tb"><svg class="i"><use href="#hand"/></svg>调</button>
      </div>
    </div>
    <svg class="plan" viewBox="703 151 969 712" preserveAspectRatio="xMinYMin slice" shape-rendering="crispEdges">
      <path fill="#b8b8b8" d="M1460 151h97v121h-97z"/>
      <!-- pile caps -->
      <path fill="#7b7b00" d="M703 253h74v88h-74zM882 253h141v88H882zM1129 253h141v88h-141zM1387 253h141v88h-141zM1625 242h47v110h-47zM703 553h74v88h-74zM1129 553h141v88h-141zM1387 553h141v88h-141zM1625 542h47v110h-47zM1401 683h110v180h-110zM1625 726h47v110h-47zM1155 737h88v88h-88zM943 733h20l36 63-9 18h-74l-9-18zM703 733h14l36 63-9 18h-41zM1206 843h74l10 20h-95z"/>
      <!-- beams -->
      <path fill="#00f700" d="M703 151h10v642h-10zM824 151h11v640h-11zM946 151h13v640h-13zM1070 151h12v640h-12zM1184 151h13v642h-13zM1187 793h12v70h-12zM1317 151h11v633h-11zM1449 151h11v135h-11zM1448 286h13v484h-13zM1557 151h12v630h-12zM1669 151h3v712h-3zM703 290h484v15H703zM1199 281h250v15h-250zM1484 290h188v15h-188zM703 589h969v15H703zM703 671h745v12H703zM703 778h484v15H703zM1211 770h223v12h-223zM1484 776h188v14h-188zM1200 793h12l32 70h-12z"/>
      <path fill="none" stroke="#00f700" stroke-width="12" d="M1147 793v16q3 34 28 60"/>
      <path fill="#007bf7" d="M882 553h141v88H882z"/>
      <!-- rebar marks -->
      <path fill="none" stroke="#b357a3" stroke-width="2" d="M730 253v88M976 253v88M1223 253v88M1434 253v88M1481 253v88M713 312h64M882 312h141M1129 312h141M1387 312h141M1625 316h47M1387 294h47M1484 294h43M730 552v88M976 552v88M1223 552v88M1434 552v88M1481 552v88M703 611h74M882 611h141M1129 611h140M1387 611h141M1625 615h47M1387 594h47M1484 594h43M1214 737v88M1155 796h88M1438 683v180M1460 790v73M1401 770h110M1401 856h110M1625 800h47M952 752l27 45h-52zM706 752l27 45h-30M1217 863v-3h52v3"/>
      <!-- columns and supports -->
      <path fill="#7b00f7" d="M703 286h15v23h-15zM941 286h24v23h-24zM1187 286h24v23h-24zM1434 286h23v23h-23zM1460 286h24v23h-24zM1669 286h3v23h-3zM703 585h15v23h-15zM1187 585h24v23h-24zM1434 585h23v23h-23zM1460 585h24v23h-24zM1669 585h3v23h-3zM703 770h15v23h-15zM941 770h24v23h-24zM1187 770h24v23h-24zM1434 770h23v23h-23zM1460 770h24v26h-24zM1669 770h3v23h-3z"/>
      <path fill="#7b00f7" d="M703 183h6v6h-6zM703 394h6v6h-6zM703 482h6v6h-6zM1187 192h6v6h-6zM1187 403h6v6h-6zM1187 491h6v6h-6zM1299 286h6v5h-6zM1387 286h6v5h-6zM1443 250h6v6h-6zM1451 250h6v6h-6zM1451 382h6v6h-6zM1451 464h6v5h-6zM1451 527h6v5h-6zM1669 371h3v4h-3zM1669 434h3v4h-3zM1669 491h3v6h-3zM1669 693h3v6h-3zM703 676h6v6h-6zM739 676h5v6h-5zM750 676h4v6h-4zM813 676h4v6h-4zM950 676h6v6h-6zM1085 676h6v6h-6zM1152 676h6v6h-6zM1187 676h6v6h-6zM1209 676h5v6h-5zM1273 676h4v6h-4zM1363 676h6v6h-6zM1451 676h6v6h-6zM703 668h6v6h-6zM739 668h5v6h-5zM1152 668h6v6h-6zM1187 668h6v6h-6zM806 787h6v6h-6zM894 787h6v6h-6zM1055 787h6v6h-6zM1143 787h6v6h-6zM1143 796h6v6h-6zM1143 770h6v6h-6zM1157 770h4v6h-4zM1283 770h11v7h-11zM1378 770h18v7h-18zM1390 781h6v6h-6z"/>
      <path fill="#fff700" d="M713 668h26v3h-26zM1158 668h26v3h-26zM1149 770h6v6h-6zM1143 776h6v2h-6z"/>
      <g fill="none" stroke="#8a62b8" stroke-width="2" stroke-dasharray="3 1" opacity=".6"><path d="M977 290v20M1224 290v20M1436 290v18M1482 290v18M1448 293h20M1436 588v18M1482 588v18M1448 592h20M946 796h18M943 610h22M1215 773v20M1439 804v20M1461 804v20M1447 768h20M1447 855h20"/></g>
      <!-- axes -->
      <path fill="none" stroke="#800000" d="M703 265.500h969M1294.500 151v712M1378.500 151v712"/>
      <path fill="none" stroke="#f00" d="M706.500 151v712M952.500 151v712M1199.500 151v712M1445.500 151v712M1472.500 151v712M703 297.500h969M703 596.500h969M703 696.500h969M703 781.500h969"/>
      <g fill="none" stroke="#007b00"><circle cx="716" cy="164" r="13"/><circle cx="952" cy="164" r="13"/><circle cx="1199" cy="164" r="13"/><circle cx="1445" cy="164" r="13"/><circle cx="1472" cy="164" r="13"/><circle cx="1681" cy="164" r="13"/><circle cx="716" cy="297" r="13"/><circle cx="716" cy="596" r="13"/><circle cx="716" cy="696" r="13"/><circle cx="716" cy="781" r="13"/></g>
      <g class="axis">
        <text x="704" y="170"><tspan class="m">1</tspan>-3</text><text x="941" y="170"><tspan class="m">1</tspan>-4</text><text x="1188" y="170"><tspan class="m">1</tspan>-5</text><text x="1434" y="170">1-<tspan class="m">6</tspan></text><text x="1460" y="170" class="k">1-7</text>
        <text x="704" y="303"><tspan class="g">1-</tspan><tspan class="m">E</tspan></text><text x="704" y="602"><tspan class="g">1-</tspan><tspan class="m">D</tspan></text><text x="704" y="702"><tspan class="m">1</tspan>-C</text><text x="704" y="787"><tspan class="g">1-</tspan><tspan class="m">B</tspan></text>
      </g>
    </svg>
  </section>
</main>
</body>
</html>
```
FILE: styles.css
```
* { box-sizing: border-box; }
body {
  margin: 0;
  height: 100vh;
  display: flex;
  flex-direction: column;
  overflow: hidden;
  background: #f0f0f0;
  color: #000;
  font: 12px/16px "Open Sans", "Noto Sans CJK SC", sans-serif;
}
button {
  padding: 0;
  border: 0;
  background: none;
  color: inherit;
  font: inherit;
  white-space: nowrap;
}
ul { margin: 0; padding: 0; list-style: none; }
.sprite { position: absolute; width: 0; height: 0; }
.i { width: 16px; height: 16px; flex: none; display: block; }
.s { width: 12px; height: 12px; display: block; }

.titlebar { flex: none; height: 6px; background: #d5e2ef; }
.appicon { display: block; width: 14px; height: 2px; margin-left: 3px; background: #1b86d8; }

.menubar {
  flex: none;
  display: flex;
  align-items: center;
  gap: 11px;
  height: 30px;
  padding-left: 7px;
  white-space: nowrap;
}
.menubar .dd { margin: 0 -3px 0 -4px; }
.hint {
  margin-left: auto;
  padding: 5px 32px 5px 28px;
  border-radius: 3px;
  background: #f8f8f8;
  color: #663300;
  text-decoration: none;
}
.edge { width: 4px; height: 26px; margin-left: -7px; border-left: 1px solid #fff; background: #f8f8f8; }

.bar { flex: none; display: flex; height: 29px; overflow: hidden; }
.bar-top { gap: 2px; }
.bar-mid { height: 27px; }
.bar-low { height: 30px; }
.group {
  flex: none;
  display: flex;
  align-items: center;
  gap: 7px;
  padding: 0 5px 0 4px;
  border-radius: 3px;
  background: linear-gradient(#fcfcfc, #f2f2f2);
}
.tb { flex: none; display: flex; align-items: center; gap: 4px; height: 23px; }
.tb:disabled { color: #8a8a8a; }
.tb.near { margin-left: -5px; }
.tb.on { padding: 0 3px; border: 1px solid #3399ff; background: #e2edf9; }
.tb.on.first { margin-left: -4px; }
.dd { flex: none; width: 5px; height: 20px; display: flex; align-items: center; }
.dd::before { content: ""; border: 3px solid transparent; border-top-color: #000; border-bottom-width: 0; }
.dd:disabled::before { border-top-color: #777; }
.dd.tight { margin-left: -4px; }
.sep { flex: none; width: 1px; height: 16px; margin: 0 -1px; background: #bbb; }
.sep.near { margin: 0 -4px 0 -3px; }
.grip { flex: none; width: 2px; height: 18px; margin-right: -2px; background: repeating-linear-gradient(#b8b8b8 0 2px, transparent 2px 4px); }
.combos { display: flex; gap: 3px; margin-left: -2px; }
select {
  appearance: none;
  width: 69px;
  height: 23px;
  padding: 0 2px;
  border: 0;
  border-radius: 0;
  background: #fff url("data:image/svg+xml,%3Csvg xmlns='http://www.w3.org/2000/svg' width='6' height='3'%3E%3Cpath d='M0 0h6L3 3z'/%3E%3C/svg%3E") no-repeat right 3px center;
  color: #000;
  font: inherit;
}
select.short { width: 57px; }
select.boxed { width: 56px; border: 1px solid #707070; background-color: #f6f6f6; margin: 0 -2px; }

.work { flex: 1; min-height: 0; display: flex; }
.cap {
  flex: none;
  display: flex;
  align-items: center;
  gap: 5px;
  height: 16px;
  padding-right: 2px;
  border: 1px solid #868686;
}
.cap h2 { flex: 1; margin: 0; font: 13px/14px "Noto Sans CJK SC", sans-serif; }

.nav, .props { font-family: "Liberation Serif", "Noto Sans CJK SC", serif; }
.nav { flex: none; width: 321px; display: flex; flex-direction: column; padding-top: 1px; }
.stage { flex: none; height: 22px; border: 1px solid #9d9d9d; border-width: 1px 1px 0; }
.cap + .stage { margin-top: 2px; }
.treebar {
  flex: none;
  display: flex;
  align-items: center;
  gap: 4px;
  height: 27px;
  padding: 0 5px;
  border: 1px solid #9d9d9d;
  border-bottom: 0;
  background: linear-gradient(#fcfcfc, #efefef);
}
.treebar svg { width: 18px; height: 18px; display: block; }
.tree {
  flex: 1;
  min-height: 0;
  overflow: hidden;
  margin-left: 2px;
  padding: 1px 0 0 10px;
  border: 1px solid #828790;
  background: #fff;
}
.node { display: flex; align-items: center; height: 16px; }
.node .t { width: 8px; height: 16px; margin-right: 2px; }
.node i { width: 3px; height: 1px; border-top: 1px dotted #888; }
.node .i { margin-right: 4px; }
.node .i:nth-of-type(3) { margin-left: 1px; }
.fresh { align-self: flex-start; margin-left: -4px; font: 9px/9px "DejaVu Sans", sans-serif; background: #ffd800; }
.tree ul li {
  display: flex;
  align-items: center;
  height: 16px;
  margin-left: 2px;
  padding-left: 19px;
  background: repeating-linear-gradient(#888 0 1px, transparent 1px 2px) 0 0 / 1px 100% no-repeat;
}
.tree ul li::before {
  content: "";
  width: 11px;
  height: 16px;
  background:
    repeating-linear-gradient(#888 0 1px, transparent 1px 2px) 0 0 / 1px 100% no-repeat,
    repeating-linear-gradient(to right, #888 0 1px, transparent 1px 2px) 0 8px / 100% 1px no-repeat;
}
.tree ul li:last-child::before { background-size: 1px 8px, 100% 1px; }
.tree ul .i { margin-right: 5px; }
.picked {
  display: flex;
  height: 16px;
  padding-right: 4px;
  border-radius: 3px;
  background: linear-gradient(#fafafa, #e6e6e6);
  box-shadow: 0 0 0 1px #d6d6d6;
}

.props { flex: none; width: 375px; margin-left: 4px; display: flex; flex-direction: column; padding-top: 1px; }
.sheet { flex: 1; min-height: 0; margin-top: 1px; padding: 1px 2px 0 1px; border: 1px solid #a0a0a0; border-bottom: 0; background: #fff; }
table { width: 100%; border-collapse: collapse; table-layout: fixed; }
th, td { height: 19px; padding: 0 0 0 2px; border: 1px solid #c0c0c0; font-weight: normal; line-height: 16px; text-align: left; white-space: nowrap; }
tbody th { padding: 0; background: linear-gradient(to right, #fbfbfb, #eee); text-align: center; }
tbody th, .n { font-family: "Liberation Sans", sans-serif; font-size: 11px; }
tbody td:nth-child(2) { padding-left: 20px; }
thead th { height: 23px; padding: 0; border-top: 0; background: linear-gradient(#fbfbfb, #ededed); text-align: center; }
.no { width: 21px; }
.key { width: 121px; }
thead .val { background: linear-gradient(#f9d79a, #f0be5f); color: #5a0050; }
.link { color: #00f; }
.dim td { color: #808080; }
.active th { background: #fdcd87; color: #5a0050; }
.active td { background: #dfeefe; }
.active td:nth-child(2) { background: #3498fe; color: #fff; }
tbody .fold:nth-child(2) { padding-left: 3px; }
.minus { width: 12px; height: 12px; margin-right: 5px; vertical-align: -2px; border: 1px solid #a8a8a8; background: linear-gradient(#000, #000) center / 7px 1px no-repeat, #eee; }
tbody .sub:nth-child(2) { padding-left: 8px; }
.sub i { display: inline-block; width: 17px; height: 18px; margin-right: 5px; vertical-align: middle; background: linear-gradient(#bbb, #bbb) 0 0 / 1px 100% no-repeat, linear-gradient(#bbb, #bbb) 0 8px / 100% 1px no-repeat; }
.sub.end i { background-size: 1px 8px, 100% 1px; }
.swatch span { display: block; height: 14px; margin: 0 4px 0 2px; border: 1px solid #000; background: #808000; }

.view { flex: 1; min-width: 0; display: flex; flex-direction: column; margin-left: 3px; background: #f0f0f0; }
.plan { flex: 1; min-height: 0; width: 100%; display: block; background: #000; }
.axis { font: 17px "DejaVu Sans", sans-serif; fill: #e6e6e6; }
.axis .m { fill: #e83ce8; }
.axis .g { fill: #b6c09a; }
.axis .k { fill: #666; }
```
